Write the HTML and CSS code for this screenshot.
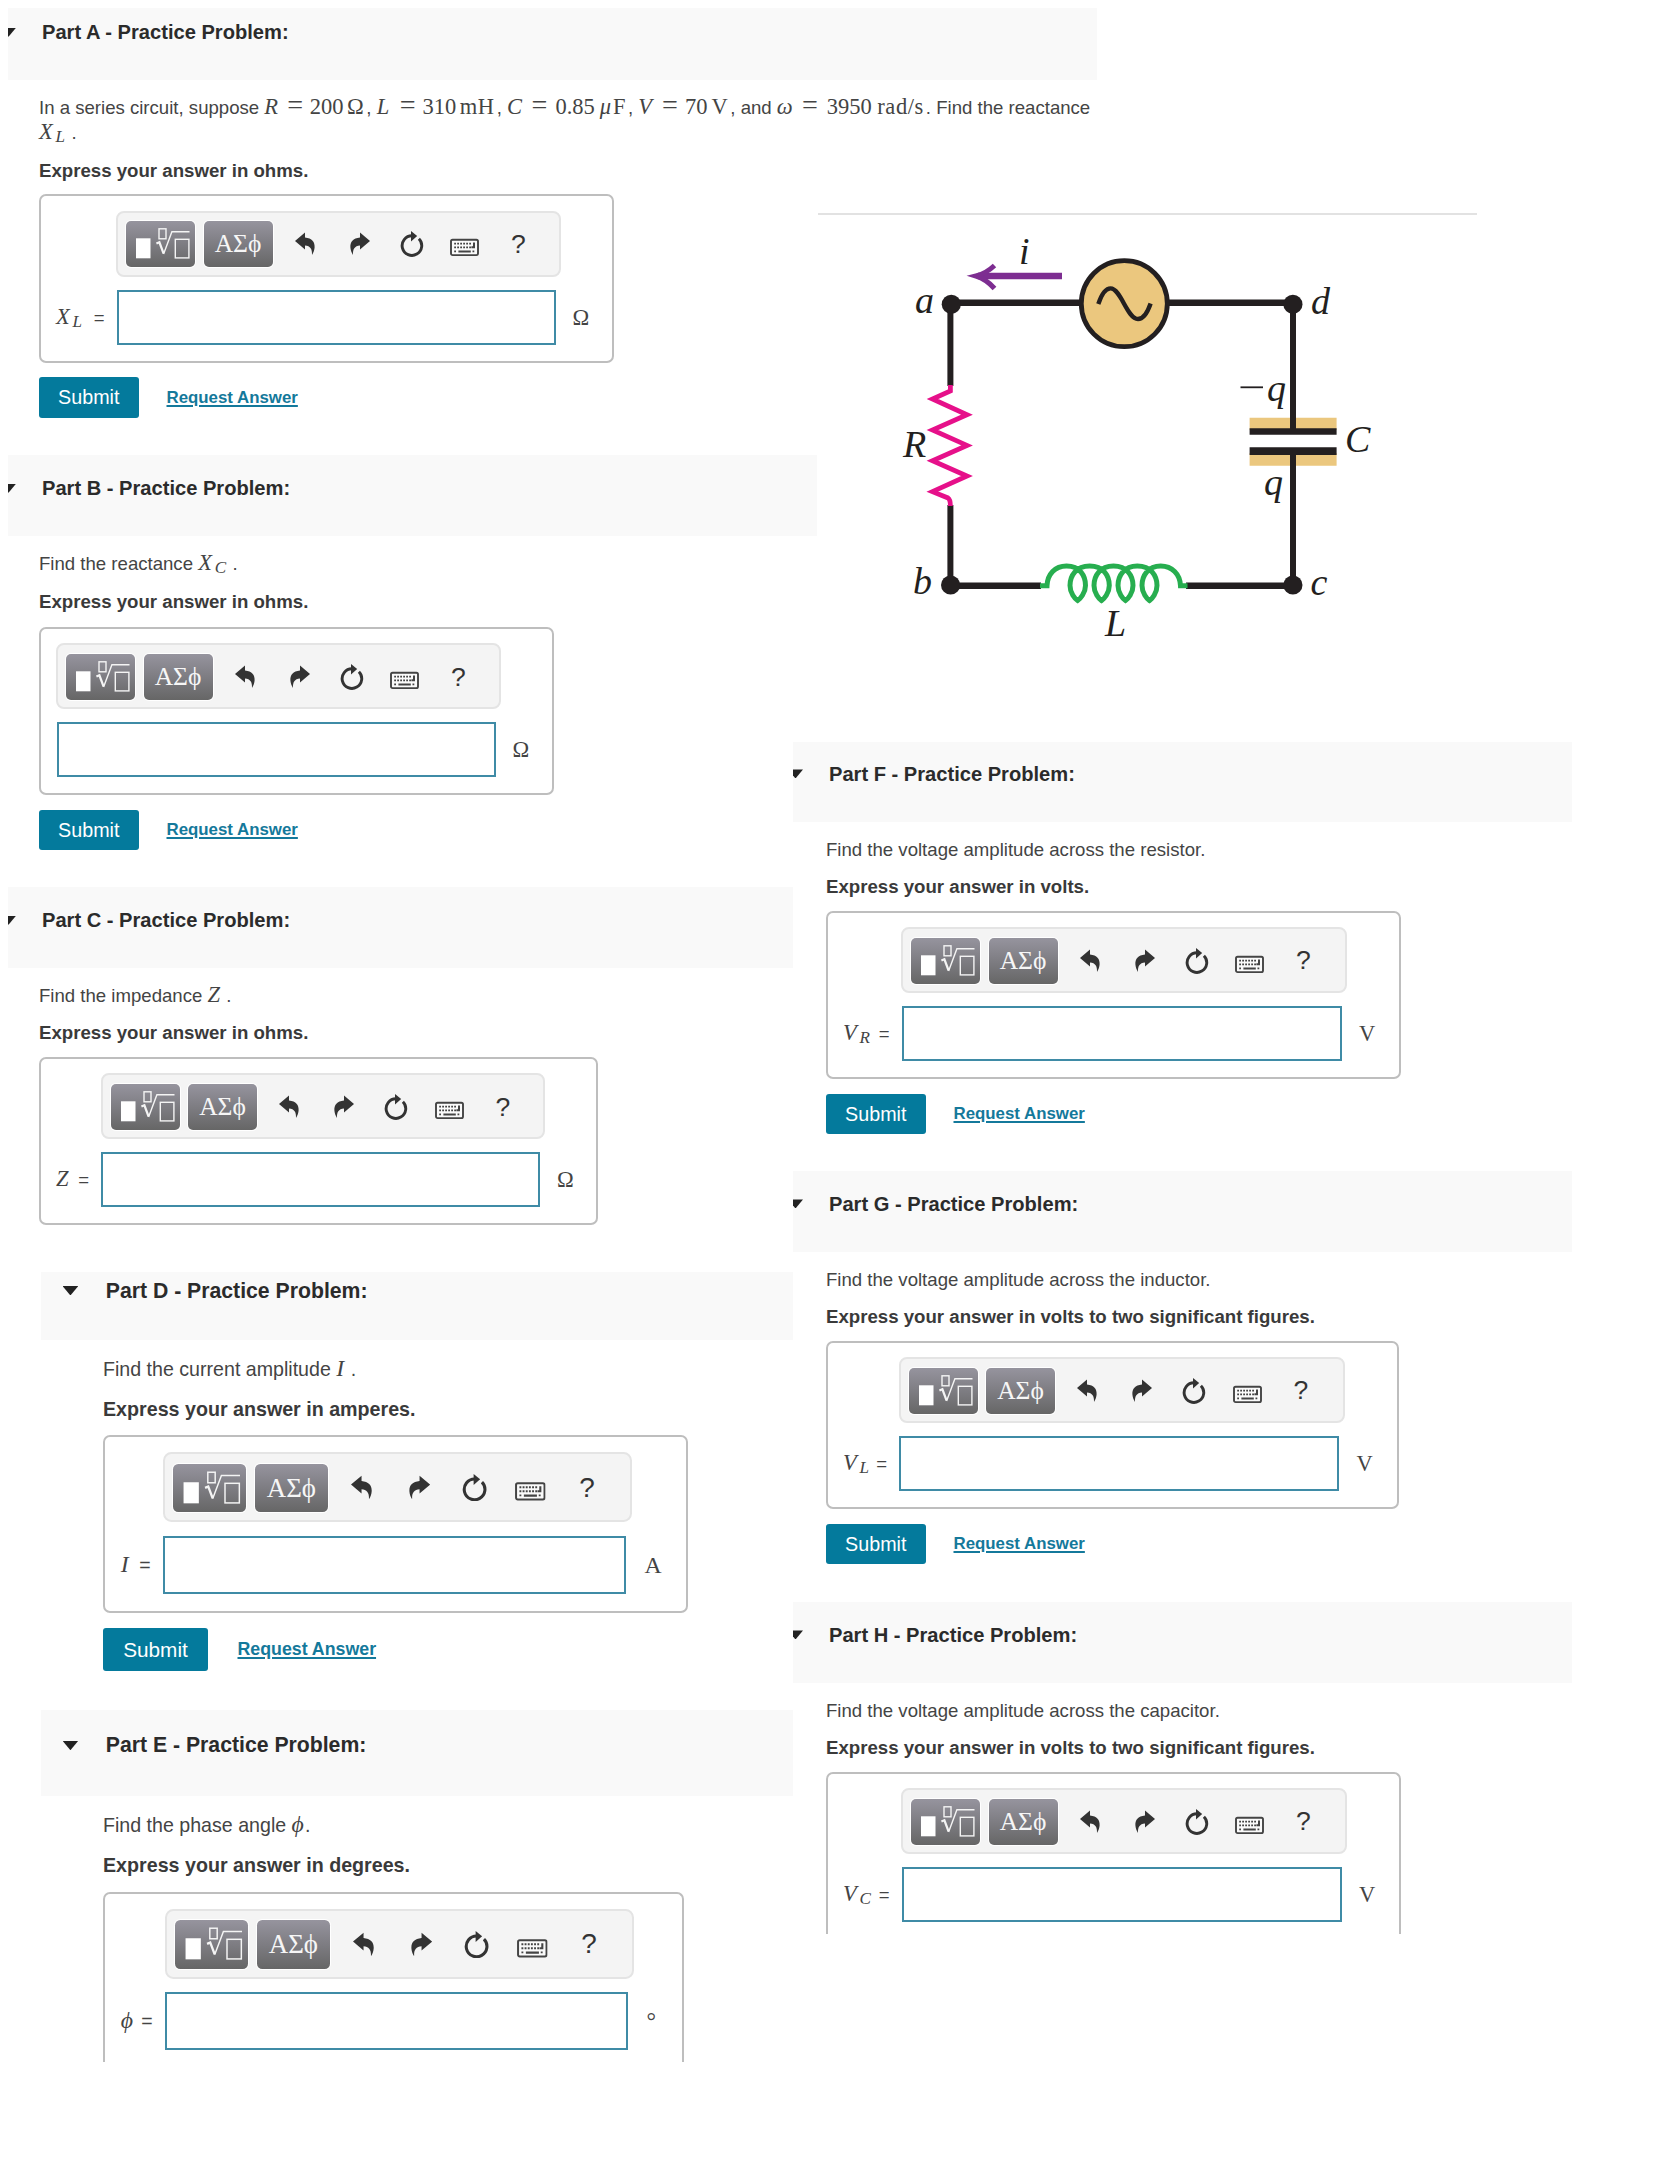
FILE: index.html
```html
<!DOCTYPE html>
<html lang="en">
<head>
<meta charset="utf-8">
<title>Practice Problem</title>
<link rel="stylesheet" href="styles.css">
</head>
<body>
<svg class="sprite" aria-hidden="true">
  <symbol id="template" viewBox="0 0 69 46">
    <rect x="10" y="17.3" width="14.5" height="20" fill="#fff"/>
    <g fill="none" stroke="#f4f4f4" stroke-width="1.4">
      <rect x="33" y="7.8" width="7" height="10"/>
      <rect x="49.3" y="18.3" width="13.6" height="18.6"/>
      <path d="M37.6 33 45.9 10.8H63.5"/>
      <path d="M30.4 22.6 33.4 21.3 37.6 32.5" stroke-width="2.2"/>
    </g>
  </symbol>
  <symbol id="undo" viewBox="0 0 20 26">
    <path fill="#333" d="M0 10 10 1.6V6.6C17 7.4 20 11 19.6 16.5 19.4 19 18.6 21.4 17 24 17.4 18 15.4 14.8 10 14.4V18.6Z"/>
  </symbol>
  <symbol id="redo" viewBox="0 0 20 26">
    <path fill="#333" d="M20 10 10 1.6V6.6C3 7.4 0 11 .4 16.5 .6 19 1.4 21.4 3 24 2.6 18 4.6 14.8 10 14.4V18.6Z"/>
  </symbol>
  <symbol id="reset" viewBox="0 0 24 26">
    <path fill="none" stroke="#333" stroke-width="2.9" d="M18.9 7.7A9.8 9.8 0 1 1 12 4.8"/>
    <path fill="#333" d="M11 0 17.2 5 11 10.4Z"/>
  </symbol>
  <symbol id="keyboard" viewBox="0 0 29 26">
    <rect x="1" y="8.7" width="27" height="15.4" rx="1.6" fill="#fafafa" stroke="#444" stroke-width="1.9"/>
    <path stroke="#444" stroke-width="1.8" stroke-dasharray="1.8 1.2" d="M4.2 12.6H22M4.2 16.3H21M4.2 20.3H7M22.5 20.3H25.4"/>
    <path fill="none" stroke="#444" stroke-width="2" d="M8.4 20.5H20.8M24 11.6V16.3H21.4"/>
  </symbol>
</svg>

<main class="page">
  <div class="column column--left">

    <section class="part part--a">
      <header class="head"><span class="caret"></span><h2>Part A - Practice Problem:</h2></header>
      <div class="body">
        <p class="question">In a series circuit, suppose <span class="eqn eqn--r"><i>R</i><b>=</b><span>200</span><span>Ω</span></span>, <span class="eqn eqn--l"><i>L</i><b>=</b><span>310</span><span>mH</span></span>, <span class="eqn eqn--c"><i>C</i><b>=</b><span>0.85</span><span><em>μ</em>F</span></span>, <span class="eqn eqn--v"><i>V</i><b>=</b><span>70</span><span>V</span></span>, and <span class="eqn eqn--w"><i>ω</i><b>=</b><span>3950</span><span>rad/s</span></span>. Find the reactance<br><span class="math"><i>X<sub>L</sub></i></span> .</p>
        <p class="hint">Express your answer in ohms.</p>
        <div class="answer">
          <div class="label"><span class="math"><i>X<sub>L</sub></i></span> =</div>
          <div class="entry">
            <div class="tools">
              <button class="pad"><svg class="template"><use href="#template"/></svg></button><button class="pad">ΑΣϕ</button>
              <svg class="undo"><use href="#undo"/></svg><svg class="redo"><use href="#redo"/></svg><svg class="reset"><use href="#reset"/></svg><svg class="keyboard"><use href="#keyboard"/></svg><span class="help">?</span>
            </div>
            <div class="field"></div>
          </div>
          <div class="unit">Ω</div>
        </div>
        <div class="actions"><button class="submit">Submit</button><a class="request">Request Answer</a></div>
      </div>
    </section>

    <section class="part part--b">
      <header class="head"><span class="caret"></span><h2>Part B - Practice Problem:</h2></header>
      <div class="body">
        <p class="question">Find the reactance <span class="math"><i>X<sub>C</sub></i></span> .</p>
        <p class="hint">Express your answer in ohms.</p>
        <div class="answer">
          <div class="entry">
            <div class="tools">
              <button class="pad"><svg class="template"><use href="#template"/></svg></button><button class="pad">ΑΣϕ</button>
              <svg class="undo"><use href="#undo"/></svg><svg class="redo"><use href="#redo"/></svg><svg class="reset"><use href="#reset"/></svg><svg class="keyboard"><use href="#keyboard"/></svg><span class="help">?</span>
            </div>
            <div class="field"></div>
          </div>
          <div class="unit">Ω</div>
        </div>
        <div class="actions"><button class="submit">Submit</button><a class="request">Request Answer</a></div>
      </div>
    </section>

    <section class="part part--c">
      <header class="head"><span class="caret"></span><h2>Part C - Practice Problem:</h2></header>
      <div class="body">
        <p class="question">Find the impedance <span class="math"><i>Z</i></span> .</p>
        <p class="hint">Express your answer in ohms.</p>
        <div class="answer">
          <div class="label"><span class="math"><i>Z</i></span> =</div>
          <div class="entry">
            <div class="tools">
              <button class="pad"><svg class="template"><use href="#template"/></svg></button><button class="pad">ΑΣϕ</button>
              <svg class="undo"><use href="#undo"/></svg><svg class="redo"><use href="#redo"/></svg><svg class="reset"><use href="#reset"/></svg><svg class="keyboard"><use href="#keyboard"/></svg><span class="help">?</span>
            </div>
            <div class="field"></div>
          </div>
          <div class="unit">Ω</div>
        </div>
      </div>
    </section>

    <section class="part part--large part--d">
      <header class="head"><span class="caret"></span><h2>Part D - Practice Problem:</h2></header>
      <div class="body">
        <p class="question">Find the current amplitude <span class="math"><i>I</i></span> .</p>
        <p class="hint">Express your answer in amperes.</p>
        <div class="answer">
          <div class="label"><span class="math"><i>I</i></span> =</div>
          <div class="entry">
            <div class="tools">
              <button class="pad"><svg class="template"><use href="#template"/></svg></button><button class="pad">ΑΣϕ</button>
              <svg class="undo"><use href="#undo"/></svg><svg class="redo"><use href="#redo"/></svg><svg class="reset"><use href="#reset"/></svg><svg class="keyboard"><use href="#keyboard"/></svg><span class="help">?</span>
            </div>
            <div class="field"></div>
          </div>
          <div class="unit">A</div>
        </div>
        <div class="actions"><button class="submit">Submit</button><a class="request">Request Answer</a></div>
      </div>
    </section>

    <section class="part part--large part--e">
      <header class="head"><span class="caret"></span><h2>Part E - Practice Problem:</h2></header>
      <div class="body">
        <p class="question">Find the phase angle <span class="math"><i>ϕ</i></span>.</p>
        <p class="hint">Express your answer in degrees.</p>
        <div class="answer answer--cut">
          <div class="label"><span class="math"><i>ϕ</i></span> =</div>
          <div class="entry">
            <div class="tools">
              <button class="pad"><svg class="template"><use href="#template"/></svg></button><button class="pad">ΑΣϕ</button>
              <svg class="undo"><use href="#undo"/></svg><svg class="redo"><use href="#redo"/></svg><svg class="reset"><use href="#reset"/></svg><svg class="keyboard"><use href="#keyboard"/></svg><span class="help">?</span>
            </div>
            <div class="field"></div>
          </div>
          <div class="unit">°</div>
        </div>
      </div>
    </section>
  </div>

  <div class="column column--right">

    <figure class="circuit">
      <svg viewBox="818 213 659 440" width="659" height="440">
        <g fill="none" stroke="#231f20">
          <path stroke-width="6.6" d="M951 302.7H1081M1168 302.7H1293M951 585.7H1041M1186 585.7H1293"/>
          <path stroke-width="6" d="M950.4 304V386M950.4 505V585M1293 304V420M1293 465V585"/>
        </g>
        <g fill="#231f20">
          <circle cx="951.3" cy="304.3" r="9.6"/><circle cx="1292.9" cy="304.3" r="9.6"/>
          <circle cx="950.6" cy="585" r="9.6"/><circle cx="1292.9" cy="585" r="9.6"/>
        </g>
        <circle cx="1124.3" cy="303.7" r="43" fill="#ebc77e" stroke="#231f20" stroke-width="4.8"/>
        <path fill="none" stroke="#231f20" stroke-width="4.4" d="M1098.3 304C1102 293 1106 288.4 1110.5 288.4 1121 288.4 1127 319 1138 319 1143 319 1147 314 1150.6 303.5"/>
        <path fill="none" stroke="#e6108a" stroke-width="4.8" d="M950.4 385V391L932.5 399 967 414.7 932.5 430 967 445.4 932.5 460.8 967 476 932.5 491.6 948 498Q950.4 499.5 950.4 506"/>
        <path fill="#ebc77e" d="M1249.6 417.7H1336.6V430H1249.6ZM1249.6 453H1336.6V465.7H1249.6Z"/>
        <path fill="#231f20" d="M1249.6 428.3H1336.6V434.8H1249.6ZM1249.6 447.2H1336.6V455H1249.6ZM1290 415H1296V430H1290ZM1290 453H1296V468H1290Z"/>
        <path fill="none" stroke="#27ae4f" stroke-width="5" d="M1040 585.7H1047C1047.5 574 1055 566 1066.5 566 1080 566 1085.5 576 1085.5 585.5 1085.5 593 1080 599 1077.7 600.5 1075 599 1070 593 1070 585.5 1070 576 1076 566 1089.700 566 1103.5 566 1109.3 576 1109.3 585.5 1109.3 593 1104 599 1101.5 600.5 1099 599 1094 593 1094 585.5 1094 576 1100 566 1113.5 566 1127 566 1133 576 1133 585.5 1133 593 1128 599 1125.4 600.5 1123 599 1118 593 1118 585.5 1118 576 1124 566 1137.3 566 1151 566 1157 576 1157 585.5 1157 593 1152 599 1149.5 600.5 1147 599 1142 593 1142 585.5 1142 576 1148 566 1160.7 566 1172 566 1180 574 1180.5 585.7H1187.5"/>
        <g fill="none" stroke="#7d2d91">
          <path stroke-width="6.4" d="M978 276H1062"/>
          <path stroke-width="5" d="M994.5 265.5Q986 273.500 976 276 986 279 994.5 288.5"/>
        </g>
        <g class="names">
          <text x="1019" y="263.5">i</text>
          <text x="915" y="313">a</text>
          <text x="1311" y="313.5">d</text>
          <text x="913" y="593.5">b</text>
          <text x="1310.5" y="595">c</text>
          <text x="903" y="456.5">R</text>
          <text x="1345" y="452">C</text>
          <text x="1105" y="635.5">L</text>
          <text x="1267" y="400.5">q</text>
          <text x="1264" y="494.500">q</text>
        </g>
        <path stroke="#231f20" stroke-width="1.8" d="M1240.500 387.3H1263"/>
      </svg>
    </figure>

    <section class="part part--f">
      <header class="head"><span class="caret"></span><h2>Part F - Practice Problem:</h2></header>
      <div class="body">
        <p class="question">Find the voltage amplitude across the resistor.</p>
        <p class="hint">Express your answer in volts.</p>
        <div class="answer">
          <div class="label"><span class="math"><i>V<sub>R</sub></i></span> =</div>
          <div class="entry">
            <div class="tools">
              <button class="pad"><svg class="template"><use href="#template"/></svg></button><button class="pad">ΑΣϕ</button>
              <svg class="undo"><use href="#undo"/></svg><svg class="redo"><use href="#redo"/></svg><svg class="reset"><use href="#reset"/></svg><svg class="keyboard"><use href="#keyboard"/></svg><span class="help">?</span>
            </div>
            <div class="field"></div>
          </div>
          <div class="unit">V</div>
        </div>
        <div class="actions"><button class="submit">Submit</button><a class="request">Request Answer</a></div>
      </div>
    </section>

    <section class="part part--g">
      <header class="head"><span class="caret"></span><h2>Part G - Practice Problem:</h2></header>
      <div class="body">
        <p class="question">Find the voltage amplitude across the inductor.</p>
        <p class="hint">Express your answer in volts to two significant figures.</p>
        <div class="answer">
          <div class="label"><span class="math"><i>V<sub>L</sub></i></span> =</div>
          <div class="entry">
            <div class="tools">
              <button class="pad"><svg class="template"><use href="#template"/></svg></button><button class="pad">ΑΣϕ</button>
              <svg class="undo"><use href="#undo"/></svg><svg class="redo"><use href="#redo"/></svg><svg class="reset"><use href="#reset"/></svg><svg class="keyboard"><use href="#keyboard"/></svg><span class="help">?</span>
            </div>
            <div class="field"></div>
          </div>
          <div class="unit">V</div>
        </div>
        <div class="actions"><button class="submit">Submit</button><a class="request">Request Answer</a></div>
      </div>
    </section>

    <section class="part part--h">
      <header class="head"><span class="caret"></span><h2>Part H - Practice Problem:</h2></header>
      <div class="body">
        <p class="question">Find the voltage amplitude across the capacitor.</p>
        <p class="hint">Express your answer in volts to two significant figures.</p>
        <div class="answer answer--cut">
          <div class="label"><span class="math"><i>V<sub>C</sub></i></span> =</div>
          <div class="entry">
            <div class="tools">
              <button class="pad"><svg class="template"><use href="#template"/></svg></button><button class="pad">ΑΣϕ</button>
              <svg class="undo"><use href="#undo"/></svg><svg class="redo"><use href="#redo"/></svg><svg class="reset"><use href="#reset"/></svg><svg class="keyboard"><use href="#keyboard"/></svg><span class="help">?</span>
            </div>
            <div class="field"></div>
          </div>
          <div class="unit">V</div>
        </div>
      </div>
    </section>
  </div>
</main>
</body>
</html>
```
FILE: styles.css
```css
* { box-sizing: border-box; }

body {
  margin: 0;
  background: #fff;
  color: #444;
  font-family: "Liberation Sans", Arial, sans-serif;
}

h2, p, figure { margin: 0; }

button {
  border: 0;
  padding: 0;
  font: inherit;
}

.sprite {
  display: block;
  width: 0;
  height: 0;
}

.page {
  display: grid;
  grid-template-columns: 785px 875px;
  height: 2157px;
  padding-left: 8px;
  overflow: hidden;
}

.column { display: grid; align-content: start; }

.column--left {
  grid-template-columns: 785px;
  grid-template-rows: 447px 432px 384.7px 438.3px 400px;
  padding-top: 8px;
}

.column--right {
  grid-template-columns: 779px;
  grid-template-rows: 528.7px 429px 431px 400px;
  padding-top: 213px;
}

/* Part header */

.part {
  --u: 1px;
  --head: 81px;
  --head-top: 21px;
  --label: 60px;
  --inset: 31px;
  --box-gap: 11.8px;
}

.part--large { --u: 1.055px; }

.head {
  display: flex;
  height: var(--head);
  padding-top: var(--head-top);
  background: #f9f9f9;
  overflow: hidden;
}

.caret {
  flex: none;
  width: calc(15 * var(--u));
  height: calc(9 * var(--u));
  margin: calc(7.8 * var(--u)) calc(26 * var(--u)) 0 -7px;
  background: #222;
  clip-path: polygon(0 0, 100% 0, 50% 100%);
}

.head h2 {
  color: #2b2b2b;
  font-size: calc(20.12 * var(--u));
  line-height: calc(24 * var(--u));
  white-space: nowrap;
}

.body { padding-left: var(--inset); }

.question, .hint {
  font-size: calc(18.6 * var(--u));
  line-height: calc(25 * var(--u));
  white-space: nowrap;
}

.question { margin-top: calc(15.2 * var(--u)); }

.hint {
  margin-top: var(--hint-gap, calc(12.4 * var(--u)));
  color: #3a3a3a;
  font-size: calc(18.65 * var(--u));
  font-weight: bold;
}

/* Formulas */

.math, .eqn, .unit {
  font-family: "Liberation Serif", "Times New Roman", serif;
  font-size: calc(22.5 * var(--u));
}

.math { line-height: 0; }
.math i { letter-spacing: .05em; }

.math sub {
  position: relative;
  top: .17em;
  margin-left: .1em;
  font-size: .76em;
  line-height: 0;
  vertical-align: baseline;
}

.eqn {
  display: inline-flex;
  justify-content: space-between;
  align-items: baseline;
  margin-right: 2px;
  line-height: 1;
}

.eqn i { min-width: .73em; }
.eqn em { margin-right: .06em; }

.eqn b {
  font-size: 1.25em;
  font-weight: normal;
  line-height: .7;
}

.eqn span:last-child {
  margin-left: -.14em;
  letter-spacing: .025em;
}

.eqn--r { width: 100px; }
.eqn--l { width: 118px; }
.eqn--c { width: 119px; }
.eqn--v { width: 90px; }
.eqn--w { width: 147px; }

/* Answer box */

.answer {
  display: flex;
  width: max-content;
  height: calc(168.5 * var(--u));
  margin-top: var(--box-gap);
  padding: calc(14.5 * var(--u)) 0 0 calc(15 * var(--u));
  border: 2px solid #bebebe;
  border-radius: 7px;
}

.answer--cut {
  height: 162px;
  border-bottom: 0;
  border-radius: 7px 7px 0 0;
}

.label {
  display: flex;
  justify-content: space-between;
  align-items: baseline;
  width: var(--label);
  height: calc(55 * var(--u));
  margin-top: calc(79 * var(--u));
  padding-right: calc(11.5 * var(--u));
  font-size: calc(18.5 * var(--u));
  line-height: calc(55 * var(--u));
  white-space: nowrap;
}

.tools {
  display: flex;
  align-items: center;
  width: calc(444.5 * var(--u));
  height: calc(66 * var(--u));
  padding: calc(1 * var(--u)) 0 0 calc(8 * var(--u));
  border: 2px solid #e4e4e4;
  border-radius: calc(8 * var(--u));
  background: #f4f4f4;
}

.tools svg { flex: none; height: calc(26 * var(--u)); }

.pad {
  flex: none;
  width: calc(69 * var(--u));
  height: calc(46 * var(--u));
  margin-right: calc(8.5 * var(--u));
  border-radius: calc(5 * var(--u));
  background: linear-gradient(#96949e, #807f85 45%, #666);
  box-shadow: 0 0 0 1px #fff;
  color: #f6f6f6;
  font-family: "Liberation Serif", "DejaVu Serif", serif;
  font-size: calc(25.5 * var(--u));
  line-height: calc(42 * var(--u));
}

.tools .template {
  display: block;
  width: calc(69 * var(--u));
  height: calc(46 * var(--u));
}

.undo { width: calc(20 * var(--u)); margin-left: calc(13.5 * var(--u)); }
.redo { width: calc(20 * var(--u)); margin-left: calc(35 * var(--u)); }
.reset { width: calc(24 * var(--u)); margin-left: calc(30 * var(--u)); }
.keyboard { width: calc(29 * var(--u)); margin-left: calc(26.5 * var(--u)); }

.help {
  margin-left: calc(32 * var(--u));
  color: #333;
  font-size: calc(26.5 * var(--u));
  line-height: 1;
}

.field {
  width: calc(439 * var(--u));
  height: calc(55 * var(--u));
  margin: calc(13 * var(--u)) 0 0 calc(.5 * var(--u));
  border: 2px solid #3f8ba6;
  background: #fff;
}

.unit {
  width: calc(51 * var(--u));
  margin-top: calc(79 * var(--u));
  padding-left: calc(12 * var(--u));
  line-height: calc(55 * var(--u));
}

/* Buttons under the answer */

.actions {
  display: flex;
  align-items: center;
  gap: calc(28 * var(--u));
  margin-top: calc(14.7 * var(--u));
}

.submit {
  width: calc(99.5 * var(--u));
  height: calc(40.5 * var(--u));
  border-radius: 3px;
  background: #047a9c;
  color: #fff;
  font-size: calc(19.7 * var(--u));
}

.request {
  color: #14799b;
  font-size: calc(16.85 * var(--u));
  font-weight: bold;
  text-decoration: underline;
  text-decoration-thickness: 1.5px;
  text-underline-offset: 2px;
}

/* Individual parts */

.part--a { --head: 72px; --head-top: 12px; --hint-gap: 12.7px; --box-gap: 11.3px; }
.part--a .head { width: 1089px; }
.part--b { --hint-gap: 13.3px; --box-gap: 12.3px; }
.part--b .head { width: 809px; }
.part--c { --label: 44.5px; --hint-gap: 12px; }

.part--large { --box-gap: 13px; }
.part--large .head { margin-left: 33px; }
.part--large .caret { margin-left: 21.5px; }
.part--d { --head: 68.6px; --head-top: 6px; --inset: 95px; --label: 42px; }
.part--e { --head: 86px; --head-top: 22.5px; --inset: 95px; --label: 44px; --hint-gap: 14px; }
.part--e .answer { height: 170px; }
.part--e .unit { width: 48px; }

.column--right .part { --inset: 33px; --label: 58px; --box-gap: 11.3px; }
.column--right .caret { margin-left: -5px; }
.column--right .part--f { --head: 80px; --head-top: 20px; }
.column--right .part--g { --label: 55.5px; }
.column--right .answer { padding-right: 1px; }
.column--right .tools { width: 446px; }
.column--right .field { width: 440px; }

/* Circuit diagram */

.circuit {
  width: 659px;
  height: 442px;
  margin-left: 25px;
  border-top: 2px solid #e2e2e2;
}

.circuit svg { display: block; margin-top: -2px; }

.names {
  fill: #231f20;
  font: italic 38px "Liberation Serif", "Times New Roman", serif;
}
```
